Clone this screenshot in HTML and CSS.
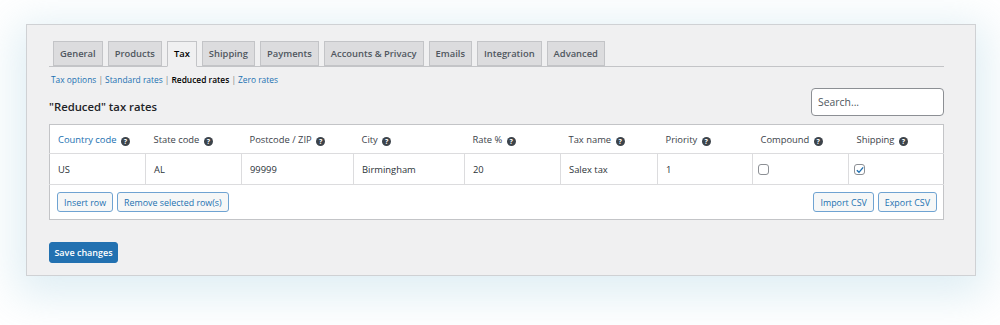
FILE: index.html
```html
<!DOCTYPE html>
<html lang="en">
<head>
<meta charset="UTF-8">
<title>Tax settings - Reduced rates</title>
<link rel="stylesheet" href="styles.css">
</head>
<body>
<div class="panel">
  <nav class="tabs">
    <a class="tab" href="#">General</a>
    <a class="tab" href="#">Products</a>
    <a class="tab active" href="#">Tax</a>
    <a class="tab" href="#">Shipping</a>
    <a class="tab" href="#">Payments</a>
    <a class="tab" href="#">Accounts &amp; Privacy</a>
    <a class="tab" href="#">Emails</a>
    <a class="tab" href="#">Integration</a>
    <a class="tab" href="#">Advanced</a>
  </nav>

  <ul class="subnav">
    <li><a href="#">Tax options</a> |</li>
    <li><a href="#">Standard rates</a> |</li>
    <li><span class="current">Reduced rates</span> |</li>
    <li><a href="#">Zero rates</a></li>
  </ul>

  <div class="heading-row">
    <h2>"Reduced" tax rates</h2>
    <input class="search" type="text" placeholder="Search...">
  </div>

  <table class="rates">
    <colgroup>
      <col style="width:96px"><col style="width:96px"><col style="width:112px">
      <col style="width:111px"><col style="width:96px"><col style="width:97px">
      <col style="width:95px"><col style="width:96px"><col>
    </colgroup>
    <thead>
      <tr>
        <th><a href="#">Country code</a> <span class="help">?</span></th>
        <th>State code <span class="help">?</span></th>
        <th>Postcode / ZIP <span class="help">?</span></th>
        <th>City <span class="help">?</span></th>
        <th>Rate % <span class="help">?</span></th>
        <th>Tax name <span class="help">?</span></th>
        <th>Priority <span class="help">?</span></th>
        <th>Compound <span class="help">?</span></th>
        <th>Shipping <span class="help">?</span></th>
      </tr>
    </thead>
    <tbody>
      <tr>
        <td>US</td>
        <td>AL</td>
        <td>99999</td>
        <td>Birmingham</td>
        <td>20</td>
        <td>Salex tax</td>
        <td>1</td>
        <td><span class="check"></span></td>
        <td><span class="check checked">
          <svg viewBox="0 0 12 12" width="10" height="10"><path d="M2.2 6.3 L4.8 8.8 L9.8 2.8" fill="none" stroke="#2271b1" stroke-width="1.7"/></svg>
        </span></td>
      </tr>
    </tbody>
    <tfoot>
      <tr>
        <td colspan="9">
          <div class="actions">
            <div class="group">
              <button class="btn">Insert row</button>
              <button class="btn">Remove selected row(s)</button>
            </div>
            <div class="group">
              <button class="btn">Import CSV</button>
              <button class="btn">Export CSV</button>
            </div>
          </div>
        </td>
      </tr>
    </tfoot>
  </table>

  <button class="save">Save changes</button>
</div>
</body>
</html>
```

FILE: styles.css
```css
* {
  box-sizing: border-box;
}

body {
  margin: 0;
  background: #fff;
  font-family: "Open Sans", "Noto Sans", sans-serif;
  color: #3c434a;
  height: 325px;
  overflow: hidden;
}

.panel {
  margin: 24px 0 0 26px;
  width: 950px;
  height: 252px;
  background: #f0f0f1;
  border: 1px solid #cfd1d4;
  padding: 16px 31px 0 22px;
  box-shadow: 0 10px 40px 10px rgba(150, 200, 220, 0.3);
}

/* tabs */
.tabs {
  display: flex;
  gap: 5px;
  padding-left: 4px;
  border-bottom: 1px solid #c3c4c7;
  height: 26px;
}

.tab {
  display: block;
  height: 25px;
  line-height: 23px;
  padding: 0 6px;
  border: 1px solid #c3c4c7;
  background: #dcdcde;
  color: #50575e;
  font-size: 9.4px;
  font-weight: 600;
  text-decoration: none;
}

.tab.active {
  background: #f0f0f1;
  color: #000;
  height: 26px;
  border-bottom-color: #f0f0f1;
}

/* sub navigation */
.subnav {
  list-style: none;
  margin: 6px 0 0;
  padding: 0 0 0 2px;
  display: flex;
  gap: 2px;
  font-size: 8.4px;
  color: #787c82;
  line-height: 14px;
}

.subnav a {
  color: #2271b1;
  text-decoration: none;
}

.subnav .current {
  color: #000;
  font-weight: 600;
}

.heading-row {
  display: flex;
  justify-content: space-between;
  align-items: flex-end;
  margin-top: 1px;
}

h2 {
  margin: 0 0 2px;
  font-size: 11.3px;
  font-weight: 600;
  color: #1d2327;
}

.search {
  width: 133px;
  height: 28px;
  border: 1px solid #8c8f94;
  border-radius: 4px;
  padding: 0 6px;
  font-family: inherit;
  font-size: 10.4px;
  color: #2c3338;
  background: #fff;
}

.search::placeholder {
  color: #50575e;
}

/* rates table */
.rates {
  margin-top: 8px;
  width: 895px;
  border-collapse: collapse;
  table-layout: fixed;
  background: #fff;
  border: 1px solid #c3c4c7;
  font-size: 9.4px;
}

.rates th {
  text-align: left;
  font-weight: 400;
  color: #3c434a;
  height: 29px;
  padding: 0 8px;
  border-bottom: 1px solid #dcdcde;
  white-space: nowrap;
}

.rates th a {
  color: #2271b1;
  text-decoration: none;
}

.rates td {
  height: 31px;
  padding: 0 8px;
  border-left: 1px solid #dcdcde;
  border-bottom: 1px solid #dcdcde;
  color: #2c3338;
}

.rates tbody td:first-child {
  border-left: none;
}

.rates tfoot td {
  height: 35px;
  border: none;
  padding: 0 6px 0 7px;
}

.help {
  display: inline-block;
  width: 9px;
  height: 9px;
  border-radius: 50%;
  background: #3c434a;
  color: #fff;
  font-size: 7px;
  font-weight: 700;
  line-height: 9px;
  text-align: center;
  vertical-align: -1px;
  margin-left: 2px;
}

.check {
  display: inline-block;
  width: 11px;
  height: 11px;
  margin-left: -3px;
  border: 1px solid #8c8f94;
  border-radius: 3px;
  background: #fff;
  vertical-align: middle;
}

.check svg {
  display: block;
  margin: 0;
}

.actions {
  display: flex;
  justify-content: space-between;
}

.group {
  display: flex;
  gap: 4px;
}

.btn {
  height: 20px;
  padding: 0 6px;
  border: 1px solid #6fa3d2;
  border-radius: 3px;
  background: #f6f7f7;
  color: #2271b1;
  font-family: inherit;
  font-size: 8.9px;
}

.save {
  margin-top: 22px;
  height: 21px;
  width: 69px;
  padding: 0;
  border: 1px solid #2271b1;
  border-radius: 3px;
  background: #2271b1;
  color: #fff;
  font-family: inherit;
  font-size: 9px;
  font-weight: 600;
}
```
